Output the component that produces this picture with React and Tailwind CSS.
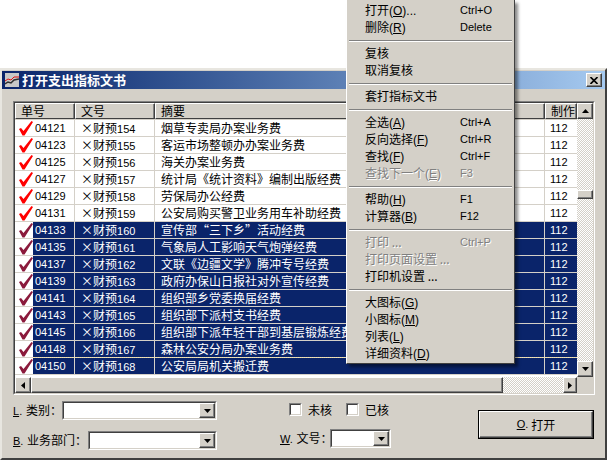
import React from 'react';

const cjk = { fontFamily: '"Noto Sans CJK SC", sans-serif' };

const rows = [
  ["04121", "154", "烟草专卖局办案业务费"],
  ["04123", "155", "客运市场整顿办办案业务费"],
  ["04125", "156", "海关办案业务费"],
  ["04127", "157", "统计局《统计资料》编制出版经费"],
  ["04129", "158", "劳保局办公经费"],
  ["04131", "159", "公安局购买警卫业务用车补助经费"],
  ["04133", "160", "宣传部“三下乡”活动经费"],
  ["04135", "161", "气象局人工影响天气炮弹经费"],
  ["04137", "162", "文联《边疆文学》腾冲专号经费"],
  ["04139", "163", "政府办保山日报社对外宣传经费"],
  ["04141", "164", "组织部乡党委换届经费"],
  ["04143", "165", "组织部下派村支书经费"],
  ["04145", "166", "组织部下派年轻干部到基层锻炼经费"],
  ["04148", "167", "森林公安分局办案业务费"],
  ["04150", "168", "公安局局机关搬迁费"],
]

const menu = [
  { cn: "打开", key: "O", tail: "...", sc: "Ctrl+O" },
  { cn: "删除", key: "R", sc: "Delete" },
  "sep",
  { cn: "复核" },
  { cn: "取消复核" },
  "sep",
  { cn: "套打指标文书" },
  "sep",
  { cn: "全选", key: "A", sc: "Ctrl+A" },
  { cn: "反向选择", key: "F", sc: "Ctrl+R" },
  { cn: "查找", key: "F", sc: "Ctrl+F" },
  { cn: "查找下一个", key: "E", sc: "F3", off: true },
  "sep",
  { cn: "帮助", key: "H", sc: "F1" },
  { cn: "计算器", key: "B", sc: "F12" },
  "sep",
  { cn: "打印 ...", sc: "Ctrl+P", off: true },
  { cn: "打印页面设置 ...", off: true },
  { cn: "打印机设置 ..." },
  "sep",
  { cn: "大图标", key: "G" },
  { cn: "小图标", key: "M" },
  { cn: "列表", key: "L" },
  { cn: "详细资料", key: "D" },
]

const dither = "bg-[repeating-conic-gradient(#d4d0c8_0_25%,#ffffff_0_50%)] bg-[length:2px_2px]"

const Raised = ({ className = "", children }) => (
  <div className={`bg-[#d4d0c8] border border-t-white border-l-white border-r-[#404040] border-b-[#404040] shadow-[inset_-1px_-1px_0_#808080] flex items-center justify-center shrink-0 ${className}`}>
    {children}
  </div>
)

const Arrow = ({ dir }) => {
  const pts = { up: "0,4 3.5,0 7,4", down: "0,0 7,0 3.5,4", left: "4,0 4,7 0,3.5", right: "0,0 0,7 4,3.5" }[dir]
  const wide = dir == "up" || dir == "down"
  return (
    <svg width={wide ? 7 : 4} height={wide ? 4 : 7} viewBox={wide ? "0 0 7 4" : "0 0 4 7"}>
      <polygon points={pts} fill="#000" />
    </svg>
  )
}

const Check = ({ color }) => (
  <svg width="14" height="15" viewBox="0 0 14 15" className="block">
    <polygon points="0,8 2,7 4.5,10 12.5,0 14,1 5.5,14.5 3.5,14.5" fill={color} />
  </svg>
)

const Row = ({ row, selected, focused }) => {
  const sel = selected ? "bg-[#0a246a] text-white" : "bg-white text-black"
  return (
    <div className="flex h-[17px] border-t border-[#d4d0c8] relative">
      <div className="w-[60px] flex border-r border-[#d4d0c8] shrink-0">
        <div className="w-[18px] pl-[4px] pt-[1px] bg-white shrink-0">
          <Check color={selected ? "#8b1a3c" : "#ff0000"} />
        </div>
        <div className={`flex-1 pl-[2px] leading-[16px] ${sel}`}>{row[0]}</div>
      </div>
      <div className={`w-[80px] border-r border-[#d4d0c8] shrink-0 pl-[6px] leading-[16px] whitespace-nowrap ${sel}`}>
        <span style={cjk} className="text-[12px]">×财预</span>{row[1]}
      </div>
      <div style={cjk} className={`w-[390px] border-r border-[#d4d0c8] shrink-0 pl-[6px] text-[12px] leading-[16px] whitespace-nowrap overflow-hidden ${sel}`}>
        {row[2]}
      </div>
      <div className={`w-[32px] pl-[5px] leading-[16px] ${sel}`}>112</div>
      {focused && <div className="absolute left-[18px] right-0 top-[-1px] border-t border-dotted border-[#ffe9a0]"></div>}
    </div>
  )
}

const Header = ({ width, pad, label }) => (
  <div style={cjk} className={`${width} ${pad} h-[16px] shrink-0 bg-[#d4d0c8] border border-t-white border-l-white border-r-[#404040] border-b-[#404040] shadow-[inset_-1px_0_0_#808080] text-[12px] leading-[14px] text-black`}>
    {label}
  </div>
)

const Sunken = ({ className = "", children }) => (
  <div className={`border border-t-[#808080] border-l-[#808080] border-r-white border-b-white ${className}`}>
    <div className="border border-t-[#404040] border-l-[#404040] border-r-[#d4d0c8] border-b-[#d4d0c8] h-full w-full flex">
      {children}
    </div>
  </div>
)

const Combo = ({ width }) => (
  <Sunken className={`${width} h-[19px] shrink-0`}>
    <div className="flex-1 bg-white"></div>
    <Raised className="w-[16px] h-full"><Arrow dir="down" /></Raised>
  </Sunken>
)

const Label = ({ letter, text, width }) => (
  <div className={`${width} shrink-0 text-[11px] whitespace-nowrap`}>
    <span className="underline">{letter}</span>.<span style={cjk} className="text-[12px] ml-[1px]">{text}</span>
  </div>
)

const CheckBox = ({ label, width }) => (
  <div className={`flex items-center ${width}`}>
    <Sunken className="w-[13px] h-[13px] shrink-0"><div className="flex-1 bg-white"></div></Sunken>
    <span style={cjk} className="ml-[6px] text-[12px] leading-[13px]">{label}</span>
  </div>
)

const MenuItem = ({ item }) => {
  const tone = item.off ? "text-[#808080] [text-shadow:1px_1px_0_#fff]" : "text-black"
  return (
    <div className={`h-[17px] flex items-center pl-[18px] leading-[17px] whitespace-nowrap ${tone}`}>
      <div className="w-[95px] shrink-0">
        <span style={cjk} className="text-[12px]">{item.cn}</span>
        {item.key && <span className="text-[12px]">(<span className="underline">{item.key}</span>)</span>}
        {item.tail && <span className="text-[12px]">{item.tail}</span>}
      </div>
      <div className="text-[11px]">{item.sc}</div>
    </div>
  )
}

const App = () => {
  return (
    <div className="relative w-[608px] h-[461px] overflow-hidden bg-white text-[11px] text-black pt-[68px]" style={{ fontFamily: '"Liberation Sans", "Noto Sans CJK SC", sans-serif' }}>
      <div className="w-[607px] h-[392px] bg-[#d4d0c8] border-2 border-t-[#e8e6e0] border-l-[#e8e6e0] border-r-[#404040] border-b-[#404040] pt-[1px] flex flex-col">
        <div className="h-[18px] shrink-0 flex items-center bg-linear-to-r from-[#0a246a] to-[#a6caf0] pl-[3px] pr-[3px]">
          <svg width="14" height="14" viewBox="0 0 14 14" className="shrink-0">
            <rect width="14" height="14" fill="#c8c8c8" />
            <polyline points="0,11 3,9 6,10 9,7 14,6" fill="none" stroke="#303030" strokeWidth="1.5" />
            <polyline points="0,8 3,6 6,7 9,4 14,4" fill="none" stroke="#e01010" strokeWidth="1" />
          </svg>
          <span style={cjk} className="ml-[3px] text-[13px] font-bold text-white leading-[18px]">打开支出指标文书</span>
          <Raised className="ml-auto w-[16px] h-[14px]">
            <svg width="8" height="7" viewBox="0 0 8 7">
              <path d="M0.5 0 L7.5 7 M7.5 0 L0.5 7" stroke="#000" strokeWidth="1.6" />
            </svg>
          </Raised>
        </div>

        <div className="ml-[11px] mt-[12px] w-[582px] h-[294px] shrink-0">
          <Sunken className="w-full h-full">
            <div className="w-[562px] flex flex-col bg-white shrink-0">
              <div className="flex">
                <Header width="w-[60px]" pad="pl-[5px]" label="单号" />
                <Header width="w-[80px]" pad="pl-[5px]" label="文号" />
                <Header width="w-[390px]" pad="pl-[5px]" label="摘要" />
                <Header width="w-[32px]" pad="pl-[5px]" label="制作" />
              </div>
              <div className="h-[258px] overflow-hidden bg-white">
                {rows.map((row, i) => <Row key={row[0]} row={row} selected={i >= 6} focused={i == 14} />)}
                <div className="border-t border-[#d4d0c8]"></div>
              </div>
              <div className="h-[16px] flex bg-[#d4d0c8]">
                <Raised className="w-[16px] h-full"><Arrow dir="left" /></Raised>
                <Raised className="w-[472px] h-full"></Raised>
                <div className={`flex-1 ${dither}`}></div>
                <Raised className="w-[14px] h-full"><Arrow dir="right" /></Raised>
              </div>
            </div>
            <div className="w-[16px] flex flex-col shrink-0 bg-[#d4d0c8]">
              <Raised className="h-[16px] w-full"><Arrow dir="up" /></Raised>
              <div className={`h-[71px] ${dither}`}></div>
              <Raised className="h-[9px] w-full"></Raised>
              <div className={`h-[162px] ${dither}`}></div>
              <Raised className="h-[16px] w-full"><Arrow dir="down" /></Raised>
            </div>
          </Sunken>
        </div>

        <div className="flex pl-[11px] pt-[6px]">
          <div className="w-[267px] shrink-0 flex flex-col gap-[11px]">
            <div className="flex items-center h-[19px]">
              <Label letter="L" text=" 类别：" width="w-[49px]" />
              <Combo width="w-[155px]" />
            </div>
            <div className="flex items-center h-[19px]">
              <Label letter="B" text=" 业务部门：" width="w-[75px]" />
              <Combo width="w-[129px]" />
            </div>
          </div>
          <div className="w-[198px] shrink-0 flex flex-col">
            <div className="flex pl-[9px] mt-[2px]">
              <CheckBox label="未核" width="w-[57px]" />
              <CheckBox label="已核" />
            </div>
            <div className="flex items-center h-[19px] mt-[13px]">
              <Label letter="W" text=" 文号：" width="w-[50px]" />
              <Combo width="w-[61px]" />
            </div>
          </div>
          <div className="mt-[9px] w-[116px] h-[29px] border border-black">
            <Raised className="w-full h-full text-[11px]">
              <span className="underline">O</span>.<span style={cjk} className="text-[12px] ml-[3px]">打开</span>
            </Raised>
          </div>
        </div>
      </div>

      {/* context menu lies over the dialog */}
      <div className="absolute left-[346px] top-0 w-[169px] h-[364px] bg-[#d4d0c8] border-l border-l-white border-r border-r-[#404040] border-b border-b-[#404040] pt-[2px] shadow-[3px_3px_3px_rgba(0,0,0,0.45)]">
        {menu.map((item, i) => item == "sep"
          ? <div key={i} className="h-[9px] flex items-center px-[2px]"><div className="w-full border-t border-t-[#808080] border-b border-b-white"></div></div>
          : <MenuItem key={i} item={item} />)}
      </div>
    </div>
  )
}

export default App;
